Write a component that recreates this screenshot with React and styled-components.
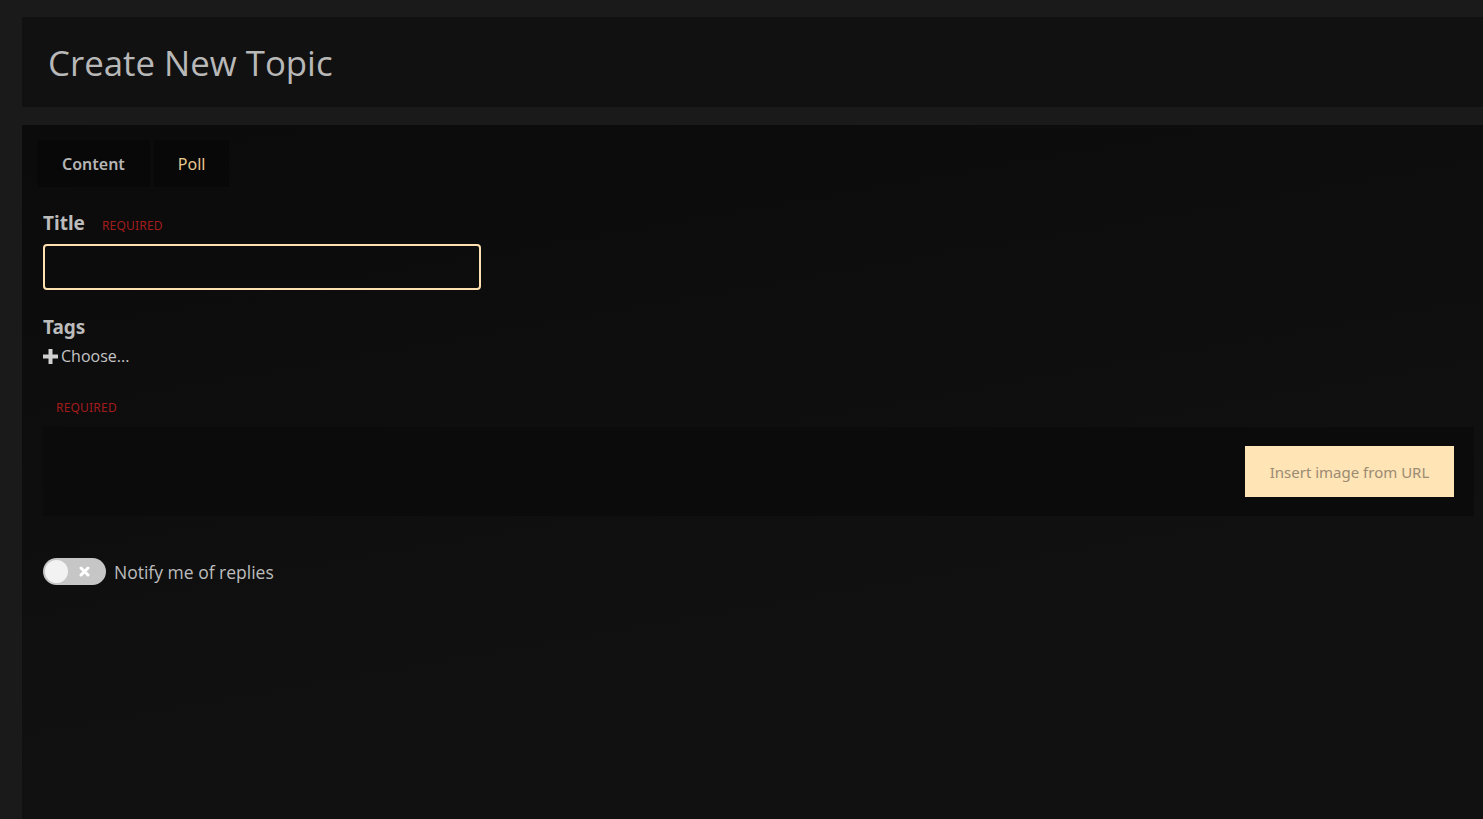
import React from "react";
import styled, { createGlobalStyle } from "styled-components";

const Global = createGlobalStyle`
  html, body { margin: 0; padding: 0; background: #1a1a1a; }
  body { font-family: "Open Sans", "Noto Sans", sans-serif; color: #ccc; }
  * { box-sizing: border-box; }
`;

const Page = styled.div`
  min-height: 819px;
  padding: 17px 0 0 22px;
  display: flex;
  flex-direction: column;
  gap: 18px;
`;

const Header = styled.div`
  background: #111111;
  height: 90px;
  display: flex;
  align-items: center;
  padding: 0 26px;
`;

const Heading = styled.h1`
  margin: 0;
  font-family: "Open Sans", sans-serif;
  font-weight: 400;
  font-size: 34.8px;
  color: #b8b8b8;
`;

const Main = styled.div`
  flex: 1;
  min-height: 694px;
  background: linear-gradient(170deg, #0b0b0c 0%, #0e0e0f 40%, #111111 70%);
  padding: 15px 9px 0 15px;
`;

const Tabs = styled.div`
  display: flex;
  gap: 4px;
`;

const Tab = styled.div`
  background: #080808;
  height: 47px;
  display: flex;
  align-items: center;
  justify-content: center;
  padding: 0 ${(p) => p.$pad}px;
  font-size: 16px;
  font-weight: ${(p) => (p.$active ? 600 : 400)};
  color: ${(p) => (p.$active ? "#b5b5b5" : "#e8c98f")};
  font-family: "Noto Sans", sans-serif;
`;

const Form = styled.div`
  padding: 23px 0 0 6px;
  display: flex;
  flex-direction: column;
`;

const LabelRow = styled.div`
  display: flex;
  align-items: baseline;
  gap: 17px;
`;

const Label = styled.div`
  font-family: "Noto Sans", sans-serif;
  font-size: 19px;
  font-weight: 700;
  color: #bcbcbc;
`;

const Required = styled.span`
  font-size: 12px;
  color: #a31c1c;
  font-family: "Noto Sans", sans-serif;
  letter-spacing: 0.2px;
`;

const Input = styled.input`
  margin-top: 8px;
  width: 438px;
  height: 46px;
  background: transparent;
  border: 2px solid #ffe0b0;
  border-radius: 4px;
  outline: none;
  color: #ccc;
`;

const TagsBlock = styled.div`
  margin-top: 24px;
  display: flex;
  flex-direction: column;
`;

const Choose = styled.div`
  display: flex;
  align-items: center;
  gap: 3px;
  font-size: 16px;
  color: #c4c4c4;
  margin-top: 5px;
`;

const ReqWrap = styled.div`
  margin-top: 28px;
  padding-left: 13px;
`;

const Editor = styled.div`
  margin-top: 10px;
  height: 89px;
  background: #0b0b0c;
  display: flex;
  justify-content: flex-end;
  align-items: flex-start;
  padding: 19px 20px 0 0;
`;

const UrlButton = styled.button`
  background: #ffe4b5;
  border: none;
  width: 209px;
  height: 51px;
  font-family: "Noto Sans", sans-serif;
  font-size: 15px;
  color: #9a8b73;
  cursor: pointer;
`;

const NotifyRow = styled.div`
  margin-top: 42px;
  display: flex;
  align-items: center;
  gap: 8px;
`;

const Toggle = styled.div`
  width: 63px;
  height: 27px;
  border-radius: 14px;
  background: #c6c6c6;
  position: relative;
  display: flex;
  align-items: center;
`;

const Knob = styled.div`
  position: absolute;
  left: 2px;
  top: 2px;
  width: 23px;
  height: 23px;
  border-radius: 50%;
  background: #f2f2f2;
`;

const NotifyText = styled.span`
  font-size: 17.5px;
  color: #bdbdbd;
`;

export default function App() {
  return (
    <>
      <Global />
      <Page>
        <Header>
          <Heading>Create New Topic</Heading>
        </Header>
        <Main>
          <Tabs>
            <Tab $active $pad={25}>Content</Tab>
            <Tab $pad={24}>Poll</Tab>
          </Tabs>
          <Form>
            <LabelRow>
              <Label>Title</Label>
              <Required>REQUIRED</Required>
            </LabelRow>
            <Input />
            <TagsBlock>
              <Label>Tags</Label>
              <Choose>
                <svg width="15" height="15" viewBox="0 0 15 15">
                  <path d="M5.5 0h4v5.5H15v4H9.5V15h-4V9.5H0v-4h5.5z" fill="#d0d0d0" />
                </svg>
                Choose...
              </Choose>
            </TagsBlock>
            <ReqWrap>
              <Required>REQUIRED</Required>
            </ReqWrap>
            <Editor>
              <UrlButton>Insert image from URL</UrlButton>
            </Editor>
            <NotifyRow>
              <Toggle>
                <Knob />
                <svg style={{ position: "absolute", left: 36, top: 8 }} width="11" height="11" viewBox="0 0 11 11">
                  <path d="M2 2L9 9M9 2L2 9" stroke="#fff" strokeWidth="3" strokeLinecap="round" />
                </svg>
              </Toggle>
              <NotifyText>Notify me of replies</NotifyText>
            </NotifyRow>
          </Form>
        </Main>
      </Page>
    </>
  );
}
